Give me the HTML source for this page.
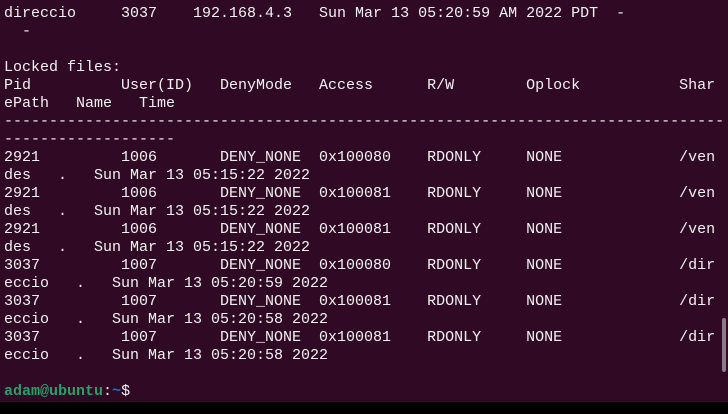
<!DOCTYPE html>
<html><head><style>
html,body{margin:0;padding:0;width:728px;height:414px;overflow:hidden;background:#000;}
#t{position:absolute;left:0;top:0;width:728px;height:402px;background:#300a24;}
pre{margin:0;position:absolute;left:4px;top:5px;font-family:"Liberation Mono",monospace;font-size:15px;line-height:18px;color:#f2f2f2;letter-spacing:0;}
.g{color:#26a269;font-weight:bold}.b{color:#2a6cc8;font-weight:bold}
#sb{position:absolute;left:722px;top:318px;width:4px;height:54px;background:#8a7a86;border-radius:2px;}
</style></head><body><div id="t"><pre>direccio     3037    192.168.4.3   Sun Mar 13 05:20:59 AM 2022 PDT  -
  -

Locked files:
Pid          User(ID)   DenyMode   Access      R/W        Oplock           Shar
ePath   Name   Time
--------------------------------------------------------------------------------
-------------------
2921         1006       DENY_NONE  0x100080    RDONLY     NONE             /ven
des   .   Sun Mar 13 05:15:22 2022
2921         1006       DENY_NONE  0x100081    RDONLY     NONE             /ven
des   .   Sun Mar 13 05:15:22 2022
2921         1006       DENY_NONE  0x100081    RDONLY     NONE             /ven
des   .   Sun Mar 13 05:15:22 2022
3037         1007       DENY_NONE  0x100080    RDONLY     NONE             /dir
eccio   .   Sun Mar 13 05:20:59 2022
3037         1007       DENY_NONE  0x100081    RDONLY     NONE             /dir
eccio   .   Sun Mar 13 05:20:58 2022
3037         1007       DENY_NONE  0x100081    RDONLY     NONE             /dir
eccio   .   Sun Mar 13 05:20:58 2022

<span class="g">adam@ubuntu</span>:<span class="b">~</span>$</pre><div id="sb"></div></div></body></html>
